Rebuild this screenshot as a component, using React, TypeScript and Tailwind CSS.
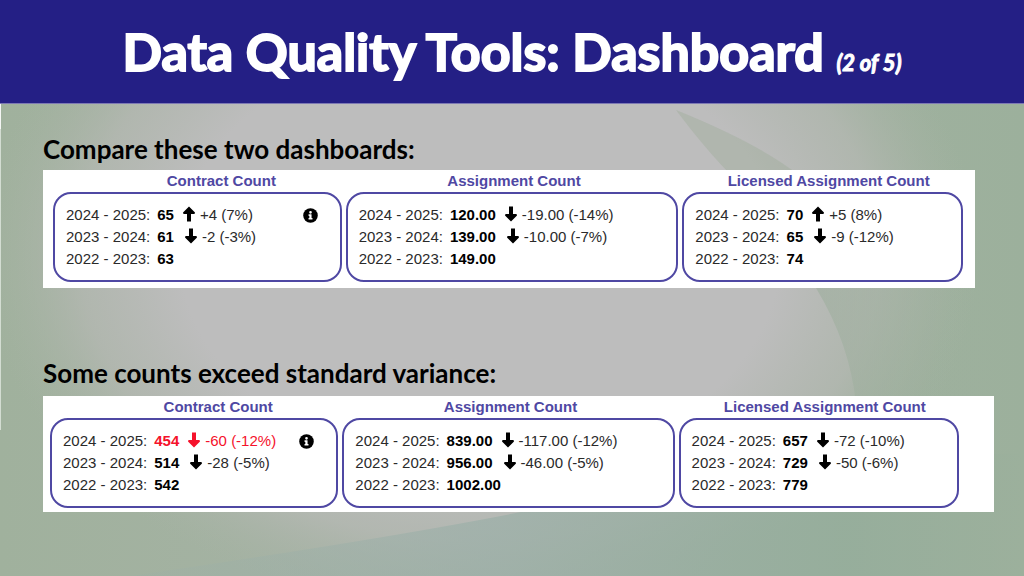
import React from 'react';

// =============================================================================
// Data
// =============================================================================

type Trend = 'up' | 'down';

interface CountRow {
    years: string;
    value: string;
    trend?: Trend;
    change?: string;
    alert?: boolean;
}

interface CountGroup {
    title: string;
    titleClass: string;
    info?: boolean;
    rows: CountRow[];
}

const smallDistrict: CountGroup[] = [
    {
        title: 'Contract Count',
        titleClass: 'pl-12',
        info: true,
        rows: [
            { years: '2024 - 2025:', value: '65', trend: 'up', change: '+4 (7%)' },
            { years: '2023 - 2024:', value: '61', trend: 'down', change: '-2 (-3%)' },
            { years: '2022 - 2023:', value: '63' },
        ],
    },
    {
        title: 'Assignment Count',
        titleClass: 'pl-1',
        rows: [
            { years: '2024 - 2025:', value: '120.00', trend: 'down', change: '-19.00 (-14%)' },
            { years: '2023 - 2024:', value: '139.00', trend: 'down', change: '-10.00 (-7%)' },
            { years: '2022 - 2023:', value: '149.00' },
        ],
    },
    {
        title: 'Licensed Assignment Count',
        titleClass: 'pl-3',
        rows: [
            { years: '2024 - 2025:', value: '70', trend: 'up', change: '+5 (8%)' },
            { years: '2023 - 2024:', value: '65', trend: 'down', change: '-9 (-12%)' },
            { years: '2022 - 2023:', value: '74' },
        ],
    },
];

const largeDistrict: CountGroup[] = [
    {
        title: 'Contract Count',
        titleClass: 'pl-12',
        info: true,
        rows: [
            { years: '2024 - 2025:', value: '454', trend: 'down', change: '-60 (-12%)', alert: true },
            { years: '2023 - 2024:', value: '514', trend: 'down', change: '-28 (-5%)' },
            { years: '2022 - 2023:', value: '542' },
        ],
    },
    {
        title: 'Assignment Count',
        titleClass: 'pl-1',
        rows: [
            { years: '2024 - 2025:', value: '839.00', trend: 'down', change: '-117.00 (-12%)' },
            { years: '2023 - 2024:', value: '956.00', trend: 'down', change: '-46.00 (-5%)' },
            { years: '2022 - 2023:', value: '1002.00' },
        ],
    },
    {
        title: 'Licensed Assignment Count',
        titleClass: 'pl-3',
        rows: [
            { years: '2024 - 2025:', value: '657', trend: 'down', change: '-72 (-10%)' },
            { years: '2023 - 2024:', value: '729', trend: 'down', change: '-50 (-6%)' },
            { years: '2022 - 2023:', value: '779' },
        ],
    },
];

// =============================================================================
// Slide
// =============================================================================

export default function App() {
    return (
        <div className="min-h-screen flex flex-col font-['Lato',sans-serif]">
            {/* Header */}
            <header className="bg-[#241f85] border-b border-[#7d79b4] px-6 pt-[18px] pb-[19px] text-center text-white">
                <h1 className="text-[52px] leading-[66px] font-bold [-webkit-text-stroke:2px_white]">
                    Data Quality Tools: Dashboard{' '}
                    <em className="text-[22px] leading-none [-webkit-text-stroke:1px_white]">(2 of 5)</em>
                </h1>
            </header>

            {/* Main Content */}
            <main className="relative isolate flex-1 overflow-hidden bg-[#bdbdbd] pt-[26px] pb-16">
                <Backdrop />

                <section className="pl-[43px] pr-[49px]">
                    <h2 className="mb-[2px] text-[26px] leading-[38px] font-bold text-black">Compare these two dashboards:</h2>
                    <div className="bg-white pl-[10px] pr-3 pb-[6px]">
                        <CountPanel groups={smallDistrict} />
                    </div>
                </section>

                <section className="mt-[66px] pl-[43px] pr-[30px]">
                    <h2 className="mb-1 text-[26px] leading-[38px] font-bold text-black">Some counts exceed standard variance:</h2>
                    <div className="bg-white pl-[7px] pr-[35px] pb-1">
                        <CountPanel groups={largeDistrict} />
                    </div>
                </section>
            </main>
        </div>
    );
}

function CountPanel({ groups }: { groups: CountGroup[] }) {
    return (
        <div className="grid grid-cols-[289fr_333fr_281fr] gap-1 font-['Liberation_Sans',sans-serif] text-[15px] leading-[22px]">
            {groups.map((group) => (
                <div key={group.title}>
                    <h3 className={`text-center font-bold text-[#4f48a3] ${group.titleClass}`}>{group.title}</h3>
                    <div className="flex justify-between rounded-[18px] border-2 border-[#4f48a3] py-[10px] pl-[11px] pr-[22px]">
                        <ul>
                            {group.rows.map((row, i) => (
                                <CountLine key={row.years} row={row} current={i === 0} />
                            ))}
                        </ul>
                        {group.info && (
                            <button type="button" aria-label="About contract counts" className="h-[22px]">
                                <InfoIcon />
                            </button>
                        )}
                    </div>
                </div>
            ))}
        </div>
    );
}

function CountLine({ row, current }: { row: CountRow; current: boolean }) {
    return (
        <li className={`flex items-center ${row.alert ? 'text-[#f5122b]' : 'text-black'}`}>
            <span className="text-[#2a2a2a]">{row.years}</span>
            <strong className="ml-[7px] font-bold">{row.value}</strong>
            {row.trend && (
                <>
                    <ArrowIcon trend={row.trend} className={current ? 'ml-[9px] mr-[5px]' : 'ml-[11px] mr-[5px]'} />
                    <span className={row.alert ? 'text-[#f5122b]' : 'text-[#2a2a2a]'}>{row.change}</span>
                </>
            )}
        </li>
    );
}

// =============================================================================
// Icons
// =============================================================================

function ArrowIcon({ trend, className }: { trend: Trend; className: string }) {
    return (
        <svg className={`w-3 h-[22px] ${className}`} viewBox="0 0 12 22" fill="currentColor" role="img" aria-label={trend}>
            {trend === 'up' ? (
                <path d="M6 2.500L12 8.500L11.500 10H8V17.500H4V10H0.500L0 8.500Z" />
            ) : (
                <path d="M6 17.500L0 11.500L0.500 10H4V2.500H8V10H11.500L12 11.500Z" />
            )}
        </svg>
    );
}

function InfoIcon() {
    return (
        <svg className="w-[15px] h-[15px]" viewBox="0 0 512 512" aria-hidden="true">
            <circle cx="256" cy="256" r="248" fill="black" />
            <path
                fill="white"
                d="M256 100a46 46 0 1 1 0 92 46 46 0 0 1 0-92zM324 384c0 7-5 12-12 12H200c-7 0-12-5-12-12v-32c0-7 5-12 12-12h16v-68h-16c-7 0-12-5-12-12v-32c0-7 5-12 12-12h80c7 0 12 5 12 12v112h20c7 0 12 5 12 12z"
            />
        </svg>
    );
}

// Soft green wash with faint curved leaves, stretched behind the content
function Backdrop() {
    return (
        <svg
            className="absolute inset-0 -z-10 w-full h-full"
            viewBox="0 0 1024 472"
            preserveAspectRatio="none"
            aria-hidden="true"
        >
            <defs>
                <linearGradient id="base" x1="0" y1="0" x2="1" y2="0">
                    <stop offset="0" stopColor="#a0b19d" />
                    <stop offset="0.5" stopColor="#a8b3a8" />
                    <stop offset="0.8" stopColor="#a0b19f" />
                    <stop offset="1" stopColor="#9cb09c" />
                </linearGradient>
                <radialGradient id="glow" cx="0.5" cy="0.5" r="0.5">
                    <stop offset="0" stopColor="#bdbdbd" />
                    <stop offset="0.6" stopColor="#bdbdbd" />
                    <stop offset="0.8" stopColor="#b7b9b5" stopOpacity="0.7" />
                    <stop offset="1" stopColor="#a8b3a5" stopOpacity="0" />
                </radialGradient>
                <linearGradient id="mist" x1="0" y1="0" x2="1" y2="0">
                    <stop offset="0" stopColor="#9bafa8" stopOpacity="0.2" />
                    <stop offset="0.4" stopColor="#9bafa8" stopOpacity="0.7" />
                    <stop offset="0.8" stopColor="#94ad9b" stopOpacity="0.8" />
                    <stop offset="1" stopColor="#9cb09c" stopOpacity="0.8" />
                </linearGradient>
                <linearGradient id="leaf" x1="0" y1="0" x2="1" y2="0">
                    <stop offset="0" stopColor="#9dae9d" stopOpacity="0.6" />
                    <stop offset="1" stopColor="#9cb09c" stopOpacity="0" />
                </linearGradient>
            </defs>
            <rect width="1024" height="472" fill="url(#base)" />
            <ellipse cx="480" cy="150" rx="500" ry="360" fill="url(#glow)" />
            <path d="M130 472Q420 430 560 400Q640 375 720 350L1024 350V472Z" fill="url(#mist)" />
            <path d="M676 6Q760 40 800 72H732Q706 46 676 6Z" fill="#9fae9c" opacity="0.45" />
            <path d="M816 184Q850 240 856 300H1024V184Z" fill="url(#leaf)" />
            <path d="M0 0H1V326H0Z" fill="#d3ddd2" />
            <path d="M0 0H1V25H0Z" fill="#f4f6f4" />
        </svg>
    );
}
